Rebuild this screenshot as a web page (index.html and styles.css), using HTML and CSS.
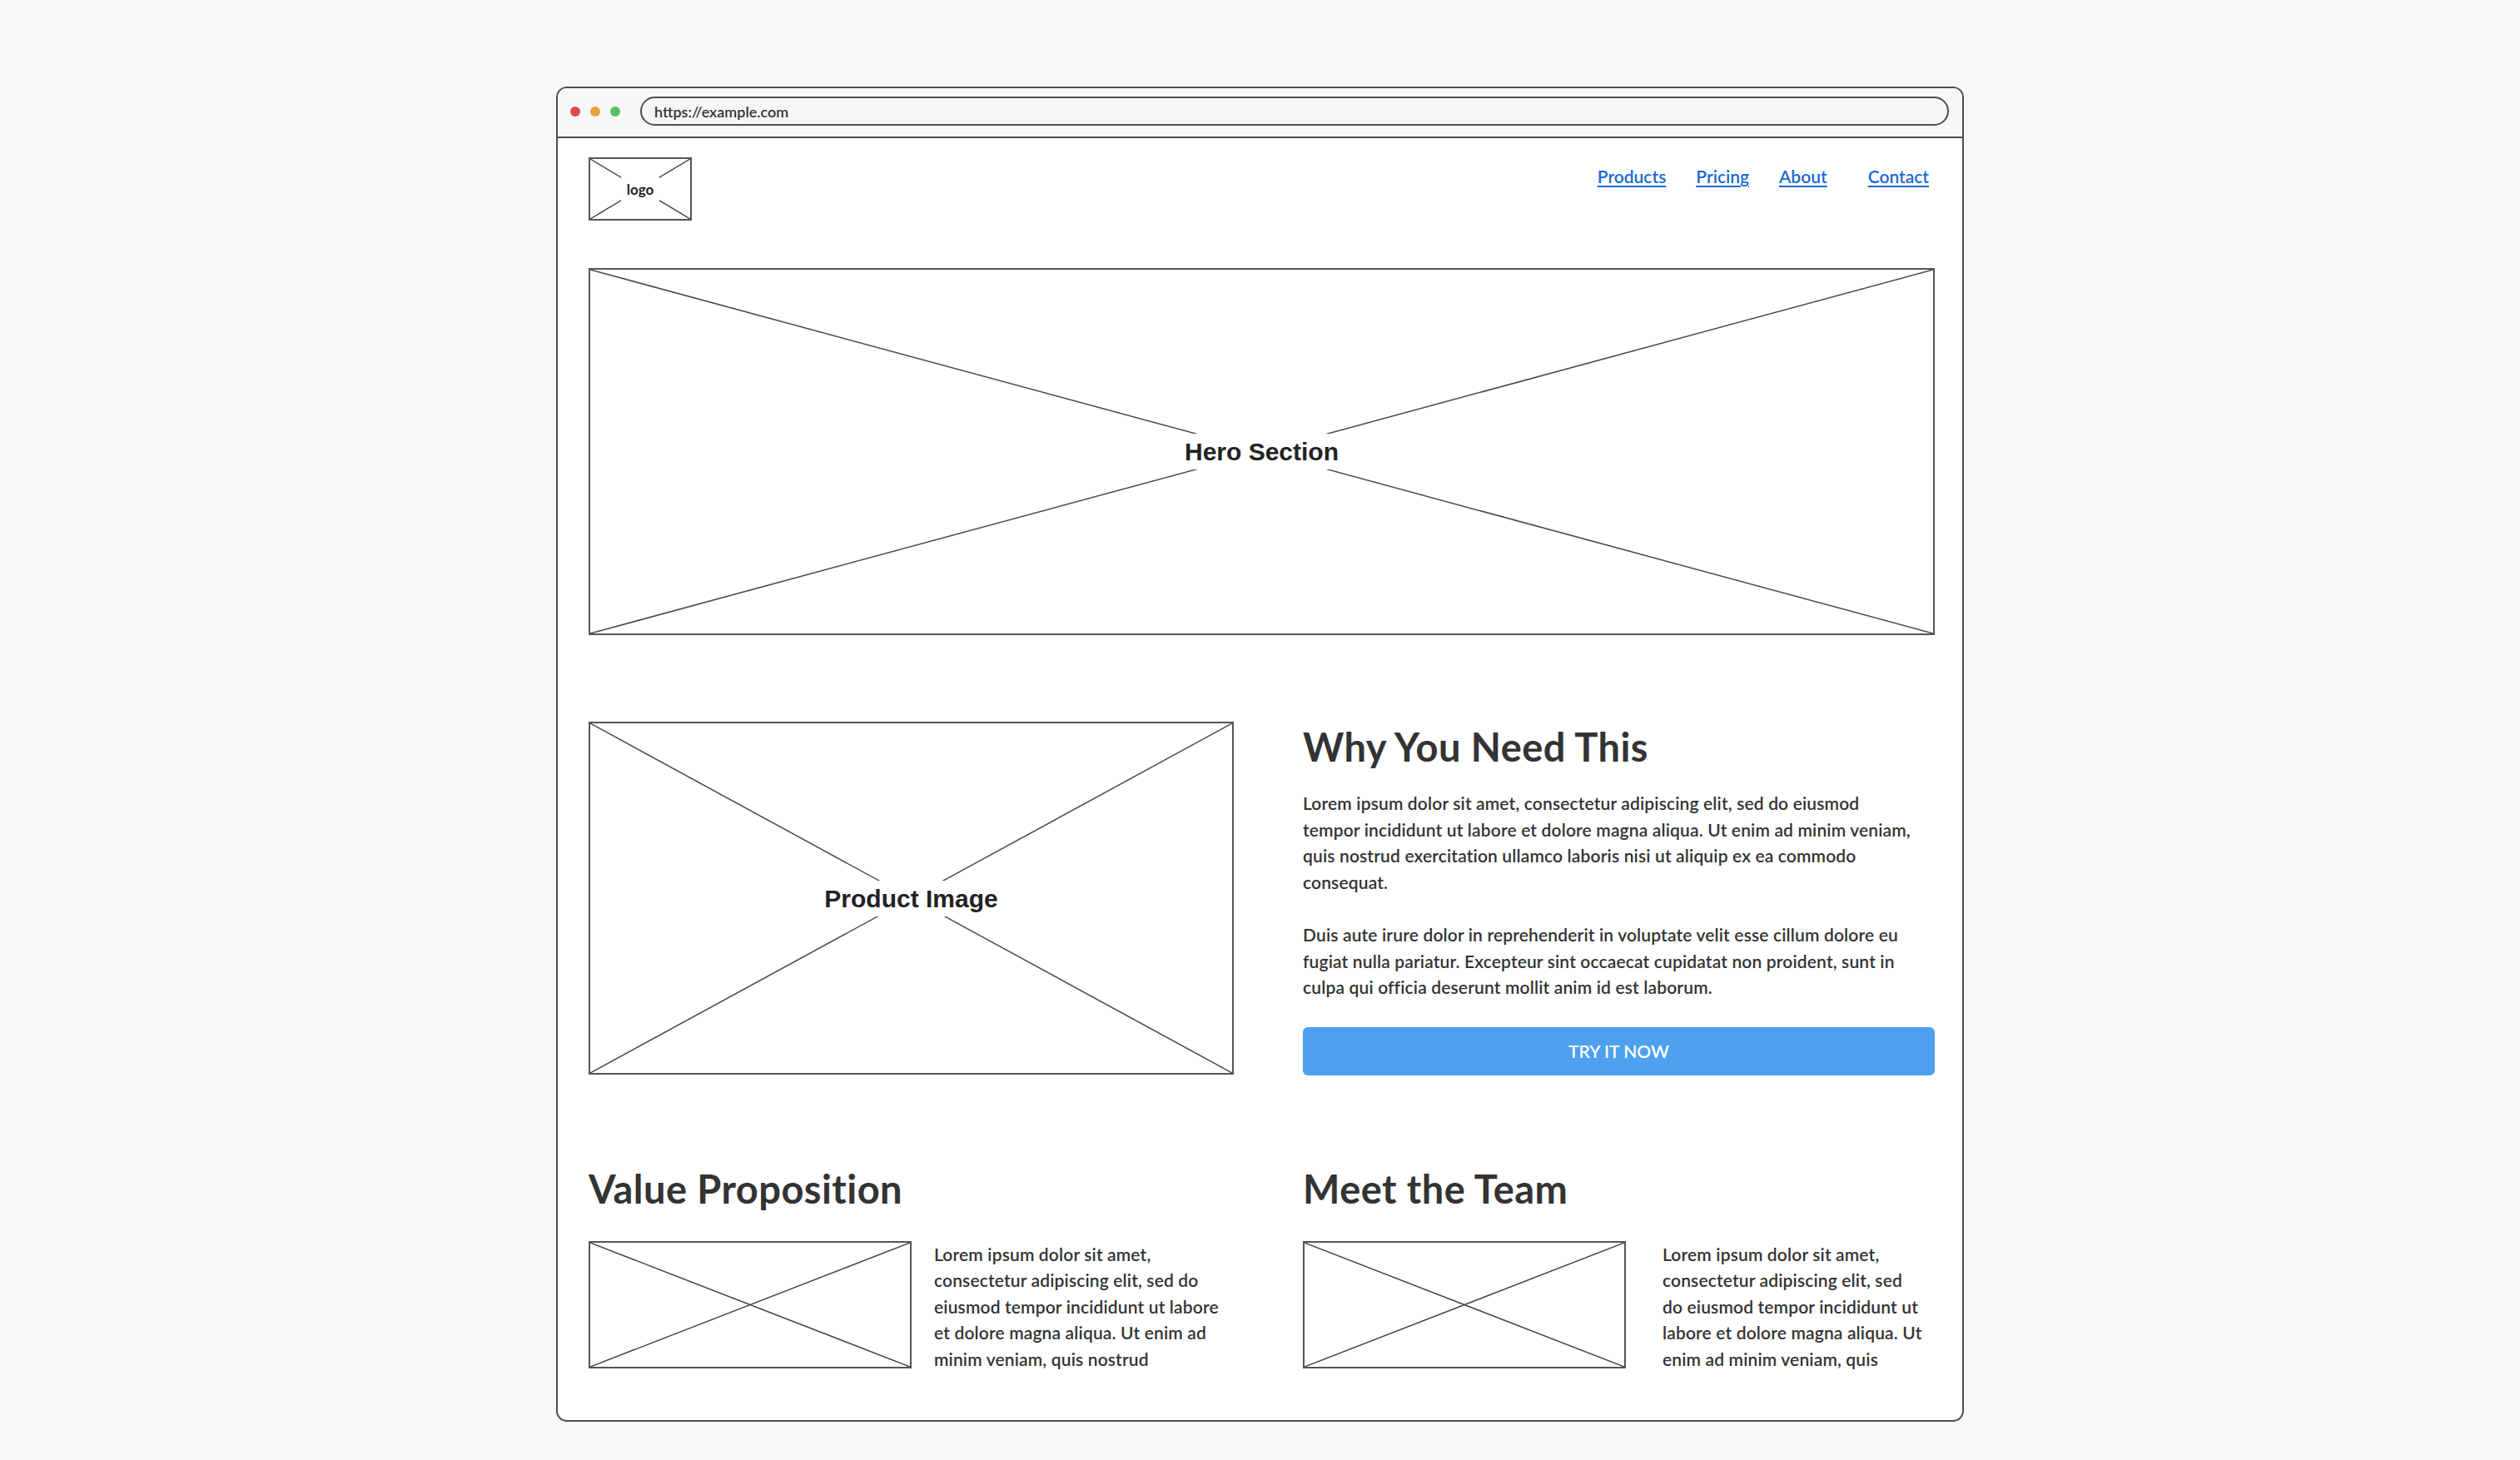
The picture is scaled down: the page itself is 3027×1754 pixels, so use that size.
FILE: index.html
```html
<!DOCTYPE html>
<html lang="en">
<head>
<meta charset="utf-8">
<title>Wireframe</title>
<link rel="stylesheet" href="styles.css">
</head>
<body>
<div class="window">
  <div class="toolbar">
    <div class="dots">
      <span class="dot dot--red"></span>
      <span class="dot dot--amber"></span>
      <span class="dot dot--green"></span>
    </div>
    <div class="address">https://example.com</div>
  </div>

  <div class="page">
    <header class="site-header">
      <div class="ph ph--logo">
        <svg class="ph-cross" viewBox="0 0 100 100" preserveAspectRatio="none"><line x1="0" y1="0" x2="100" y2="100"/><line x1="100" y1="0" x2="0" y2="100"/></svg>
        <span class="ph-label ph-label--small">logo</span>
      </div>
      <nav class="nav">
        <a href="#">Products</a>
        <a href="#">Pricing</a>
        <a href="#">About</a>
        <a href="#" class="nav-last">Contact</a>
      </nav>
    </header>

    <section class="ph ph--hero">
      <svg class="ph-cross" viewBox="0 0 100 100" preserveAspectRatio="none"><line x1="0" y1="0" x2="100" y2="100"/><line x1="100" y1="0" x2="0" y2="100"/></svg>
      <span class="ph-label">Hero Section</span>
    </section>

    <section class="feature">
      <div class="ph ph--product">
        <svg class="ph-cross" viewBox="0 0 100 100" preserveAspectRatio="none"><line x1="0" y1="0" x2="100" y2="100"/><line x1="100" y1="0" x2="0" y2="100"/></svg>
        <span class="ph-label">Product Image</span>
      </div>
      <div class="feature-copy">
        <h2 class="heading">Why You Need This</h2>
        <p class="copy">Lorem ipsum dolor sit amet, consectetur adipiscing elit, sed do eiusmod<br>tempor incididunt ut labore et dolore magna aliqua. Ut enim ad minim veniam,<br>quis nostrud exercitation ullamco laboris nisi ut aliquip ex ea commodo<br>consequat.</p>
        <p class="copy">Duis aute irure dolor in reprehenderit in voluptate velit esse cillum dolore eu<br>fugiat nulla pariatur. Excepteur sint occaecat cupidatat non proident, sunt in<br>culpa qui officia deserunt mollit anim id est laborum.</p>
        <a href="#" class="btn">TRY IT NOW</a>
      </div>
    </section>

    <section class="columns">
      <div class="col">
        <h2 class="heading">Value Proposition</h2>
        <div class="media">
          <div class="ph ph--thumb">
            <svg class="ph-cross" viewBox="0 0 100 100" preserveAspectRatio="none"><line x1="0" y1="0" x2="100" y2="100"/><line x1="100" y1="0" x2="0" y2="100"/></svg>
          </div>
          <p class="copy media-text">Lorem ipsum dolor sit amet,<br>consectetur adipiscing elit, sed do<br>eiusmod tempor incididunt ut labore<br>et dolore magna aliqua. Ut enim ad<br>minim veniam, quis nostrud</p>
        </div>
      </div>
      <div class="col">
        <h2 class="heading">Meet the Team</h2>
        <div class="media media--wide-gap">
          <div class="ph ph--thumb">
            <svg class="ph-cross" viewBox="0 0 100 100" preserveAspectRatio="none"><line x1="0" y1="0" x2="100" y2="100"/><line x1="100" y1="0" x2="0" y2="100"/></svg>
          </div>
          <p class="copy media-text">Lorem ipsum dolor sit amet,<br>consectetur adipiscing elit, sed<br>do eiusmod tempor incididunt ut<br>labore et dolore magna aliqua. Ut<br>enim ad minim veniam, quis</p>
        </div>
      </div>
    </section>
  </div>
</div>
</body>
</html>
```

FILE: styles.css
```css
* {
  box-sizing: border-box;
}

html, body {
  margin: 0;
  padding: 0;
}

body {
  background: #f7f8fa;
  font-family: "Lato", "Liberation Sans", sans-serif;
  color: #333;
  min-height: 100vh;
  padding-top: 104px;
}

/* browser window chrome */
.window {
  width: 1691px;
  margin: 0 auto;
  border: 2px solid #4d4d4d;
  border-radius: 13px;
  background: #fff;
  overflow: hidden;
}

.toolbar {
  height: 60px;
  display: flex;
  align-items: flex-start;
  padding: 10px 16px 0 15px;
  background: #f6f7f9;
  border-bottom: 2px solid #4d4d4d;
}

.dots {
  display: flex;
  gap: 12px;
  margin-top: 12px;
  margin-right: 24px;
}

.dot {
  width: 12px;
  height: 12px;
  border-radius: 50%;
}

.dot--red { background: #e0484a; }
.dot--amber { background: #e9a23b; }
.dot--green { background: #58c15a; }

.address {
  flex: 1;
  height: 35px;
  display: flex;
  align-items: center;
  padding-left: 15px;
  border: 2px solid #4d4d4d;
  border-radius: 18px;
  font-size: 18px;
  font-weight: 600;
  color: #333;
}

/* page content */
.page {
  padding: 23px 33px 58px 37px;
}

.site-header {
  display: flex;
  justify-content: space-between;
  align-items: flex-start;
}

.nav {
  display: flex;
  gap: 36px;
  padding-top: 10px;
  padding-right: 7px;
}

.nav a {
  font-size: 21px;
  font-weight: 600;
  color: #1b6ad3;
  text-decoration: underline;
  text-underline-offset: 3px;
}

.nav .nav-last {
  margin-left: 13px;
}

/* image placeholders */
.ph {
  position: relative;
  display: flex;
  align-items: center;
  justify-content: center;
  border: 2px solid #555;
  background: #fff;
}

.ph-cross {
  position: absolute;
  inset: 0;
  width: 100%;
  height: 100%;
}

.ph-cross line {
  stroke: #474747;
  stroke-width: 1.5;
  vector-effect: non-scaling-stroke;
}

.ph-label {
  position: relative;
  background: #fff;
  padding: 6px 10px;
  font-family: "Comic Sans MS", "Liberation Sans", sans-serif;
  font-weight: 700;
  font-size: 30px;
  line-height: 31px;
  color: #222;
}

.ph-label--small {
  font-family: "Lato", "Liberation Sans", sans-serif;
  font-size: 17px;
  line-height: 19px;
  padding: 5px 7px;
}

.ph--logo {
  width: 124px;
  height: 76px;
}

.ph--hero {
  margin-top: 57px;
  height: 441px;
}

.ph--product {
  height: 424px;
}

.ph--thumb {
  flex: 0 0 388px;
  height: 153px;
}

/* feature row */
.feature {
  margin-top: 104px;
  display: grid;
  grid-template-columns: 775px 1fr;
  column-gap: 83px;
}

.feature-copy {
  display: flex;
  flex-direction: column;
}

.heading {
  margin: 0;
  font-size: 47px;
  line-height: 55px;
  font-weight: 700;
  color: #333;
  letter-spacing: 0.45px;
}

.feature-copy .heading {
  margin-top: 3px;
  margin-bottom: 24px;
}

.copy {
  margin: 0 0 32px;
  font-size: 21px;
  line-height: 31.5px;
  font-weight: 600;
  color: #333;
  letter-spacing: 0.15px;
  white-space: nowrap;
}

.btn {
  display: block;
  height: 58px;
  line-height: 58px;
  text-align: center;
  background: #4da1ef;
  color: #fff;
  border-radius: 6px;
  font-size: 21px;
  font-weight: 600;
  text-decoration: none;
}

/* bottom columns */
.columns {
  margin-top: 109px;
  display: grid;
  grid-template-columns: 775px 1fr;
  column-gap: 83px;
}

.col .heading {
  margin-bottom: 35px;
}

.media {
  display: flex;
  align-items: flex-start;
  gap: 27px;
}

.media--wide-gap {
  gap: 44px;
}

.media-text {
  margin: 0;
}
```
